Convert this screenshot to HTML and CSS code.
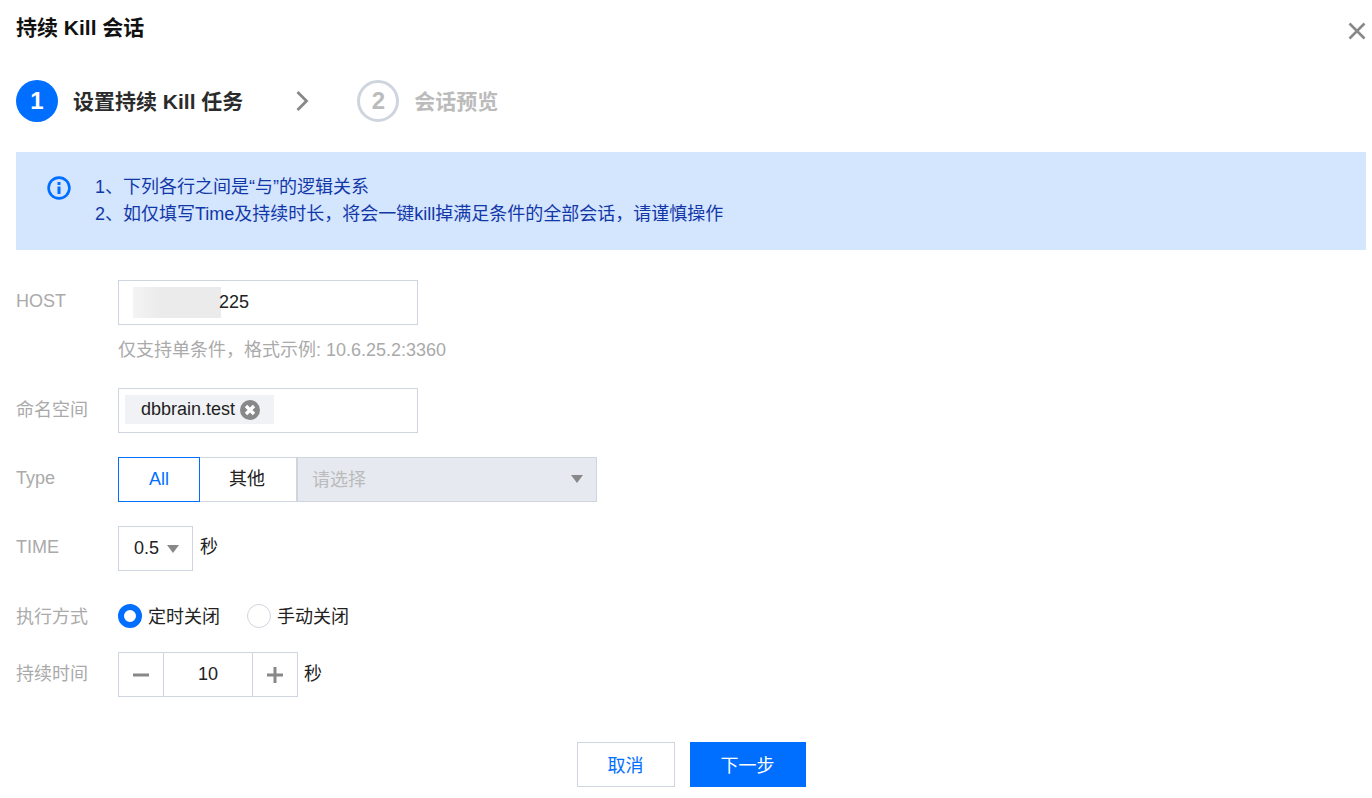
FILE: index.html
```html
<!DOCTYPE html>
<html lang="zh">
<head>
<meta charset="utf-8">
<title>持续 Kill 会话</title>
<link rel="stylesheet" href="styles.css">
</head>
<body>
<div class="dialog">
  <header class="head">
    <h1 class="title">持续 Kill 会话</h1>
    <svg class="close" width="18" height="18" viewBox="0 0 18 18"><path d="M1.5 1.5l15 15M16.5 1.500l-15 15" stroke="#888" stroke-width="2.6" fill="none"/></svg>
  </header>
  <div class="steps">
    <span class="num on">1</span>
    <span class="step-text">设置持续 Kill 任务</span>
    <svg class="chev" width="14" height="22" viewBox="0 0 14 22"><path d="M2.5 2l9 9-9 9" stroke="#888" stroke-width="2.8" fill="none"/></svg>
    <span class="num off">2</span>
    <span class="step-text muted">会话预览</span>
  </div>
  <div class="alert">
    <svg class="alert-icon" width="24" height="24" viewBox="0 0 24 24"><circle cx="12" cy="12" r="10.4" fill="none" stroke="#006eff" stroke-width="2.6"/><rect x="10.5" y="10.5" width="3" height="7.5" fill="#006eff"/><rect x="10.5" y="6" width="3" height="3" fill="#006eff"/></svg>
    <div class="alert-text">
      <p>1、下列各行之间是“与”的逻辑关系</p>
      <p>2、如仅填写Time及持续时长，将会一键kill掉满足条件的全部会话，请谨慎操作</p>
    </div>
  </div>
  <form class="form">
    <div class="row host-row">
      <label class="label">HOST</label>
      <div class="field">
        <div class="box wide"><span class="blur"></span><span class="val">225</span></div>
        <p class="hint">仅支持单条件，格式示例: 10.6.25.2:3360</p>
      </div>
    </div>
    <div class="row">
      <label class="label ns-label">命名空间</label>
      <div class="box wide tagbox">
        <span class="tag">dbbrain.test<svg class="tag-x" width="20" height="20" viewBox="0 0 20 20"><circle cx="10" cy="10" r="10" fill="#888"/><path d="M6 6l8 8M14 6l-8 8" stroke="#fff" stroke-width="3.400"/></svg></span>
      </div>
    </div>
    <div class="row">
      <label class="label">Type</label>
      <div class="group">
        <span class="seg seg-on">All</span>
        <span class="seg seg-other">其他</span>
        <span class="sel-off">请选择<i class="caret"></i></span>
      </div>
    </div>
    <div class="row">
      <label class="label">TIME</label>
      <div class="box time-box">0.5<i class="caret"></i></div>
      <span class="unit">秒</span>
    </div>
    <div class="row radio-row">
      <label class="label">执行方式</label>
      <span class="radio checked"></span><span class="radio-text">定时关闭</span>
      <span class="radio"></span><span class="radio-text">手动关闭</span>
    </div>
    <div class="row stepper-row">
      <label class="label step-label">持续时间</label>
      <div class="stepper">
        <span class="st-btn"><svg width="18" height="18" viewBox="0 0 18 18"><rect x="1" y="7.500" width="16" height="3" fill="#888"/></svg></span>
        <span class="st-val">10</span>
        <span class="st-btn"><svg width="18" height="18" viewBox="0 0 18 18"><path d="M1 7.500h6.500V1h3v6.500H17v3h-6.500V17h-3v-6.500H1z" fill="#888"/></svg></span>
      </div>
      <span class="unit unit-step">秒</span>
    </div>
    <div class="actions">
      <button type="button" class="btn ghost">取消</button>
      <button type="button" class="btn primary">下一步</button>
    </div>
  </form>
</div>
</body>
</html>
```

FILE: styles.css
```css
* { box-sizing: border-box; }
html, body { margin: 0; padding: 0; background: #fff; overflow: hidden; }
body { width: 1372px; height: 798px; font-family: "Liberation Sans", "Noto Sans CJK SC", sans-serif; font-size: 18px; color: #222; }
.dialog { padding: 0 6px 0 16px; }
.head { display: flex; justify-content: space-between; align-items: center; height: 56px; }
.title { margin: 0; font-size: 21px; font-weight: 700; color: #111; line-height: 56px; }
.close { margin-top: 6px; margin-right: 0; }
.steps { display: flex; align-items: center; margin-top: 24px; height: 42px; }
.num { width: 42px; height: 42px; border-radius: 50%; display: flex; align-items: center; justify-content: center; font-size: 24px; font-weight: 700; }
.num.on { background: #006eff; color: #fff; }
.num.off { border: 3px solid #cfd5de; color: #bbb; }
.step-text { margin-left: 15px; padding-top: 2px; font-size: 21px; font-weight: 700; color: #2b2b2b; line-height: 42px; }
.step-text.muted { color: #bbb; }
.chev { margin-left: 52px; margin-right: 48px; }
.alert { display: flex; margin-top: 30px; height: 98px; background: #d4e5fe; padding: 22px 0 0 31px; }
.alert-icon { margin-top: 2px; flex: none; }
.alert-text { margin-left: 24px; color: #1238a8; line-height: 27px; }
.alert-text p { margin: 0; }
.form { padding-top: 30px; }
.row { display: flex; align-items: center; margin-bottom: 24px; min-height: 45px; line-height: 24px; }
.host-row { align-items: flex-start; margin-bottom: 25px; }
.host-row .label { line-height: 43px; }
.label { width: 102px; flex: none; color: #aaa; padding-bottom: 3px; }
.ns-label { padding-bottom: 1px; }
.step-label { padding-bottom: 1px; }
.box { height: 45px; border: 1px solid #cfd5de; display: flex; align-items: center; background: #fff; }
.wide { width: 300px; }
.blur { width: 88px; height: 31px; margin: 0 -2px 0 14px; background: linear-gradient(90deg, #f4f4f4 0, #ebebeb 30%, #ebebeb 100%); }
.val { position: relative; padding-bottom: 2px; }
.hint { margin: 0; color: #aaa; line-height: 38px; height: 38px; padding-top: 6px; }
.field { display: block; }
.tagbox { padding-left: 6px; }
.tag { display: flex; align-items: center; width: 149px; height: 29px; margin-bottom: 2px; padding-left: 16px; background: #f1f2f5; color: #222; padding-bottom: 1px; }
.tag-x { margin-left: 5px; margin-top: 1px; }
.group { display: flex; height: 45px; }
.seg { height: 45px; display: flex; align-items: center; justify-content: center; padding-bottom: 2px; }
.seg-on { width: 82px; border: 1px solid #006eff; color: #006eff; }
.seg-other { width: 97px; border: 1px solid #cfd5de; border-left: 0; padding-right: 2px; }
.sel-off { position: relative; width: 300px; height: 45px; display: flex; align-items: center; padding: 0 0 0 14px; background: #e6e9ef; border: 1px solid #cfd5de; color: #bbb; }
.sel-off .caret { position: absolute; right: 13px; top: 17px; margin: 0; }
.caret { display: inline-block; width: 0; height: 0; border-left: 6px solid transparent; border-right: 6px solid transparent; border-top: 8px solid #888; }
.time-box { width: 75px; padding-left: 15px; padding-bottom: 2px; }
.time-box .caret { margin-left: 8px; margin-top: 2px; }
.unit { margin-left: 7px; padding-bottom: 3px; }
.unit-step { margin-left: 6px; padding-bottom: 1px; }
.radio-row { min-height: 0; height: 24px; margin-bottom: 24px; margin-top: 33px; }
.radio-row .label { padding-bottom: 0; padding-top: 2px; }
.radio { width: 24px; height: 24px; border-radius: 50%; border: 1px solid #cfd5de; flex: none; }
.radio.checked { border: 6px solid #006eff; }
.radio-text { margin-left: 6px; margin-right: 27px; padding-top: 2px; }
.stepper { display: flex; width: 180px; height: 45px; border: 1px solid #cfd5de; }
.st-btn { width: 44px; display: flex; align-items: center; justify-content: center; flex: none; }
.st-val { flex: 1; display: flex; align-items: center; justify-content: center; border-left: 1px solid #cfd5de; border-right: 1px solid #cfd5de; padding-bottom: 2px; }
.stepper-row { margin-bottom: 45px; }
.actions { display: flex; justify-content: center; gap: 15px; }
.btn { height: 45px; font: inherit; border: 1px solid #cfd5de; cursor: pointer; padding: 0 0 2px; }
.ghost { width: 98px; background: #fff; color: #006eff; }
.primary { width: 116px; background: #006eff; border-color: #006eff; color: #fff; }
```
